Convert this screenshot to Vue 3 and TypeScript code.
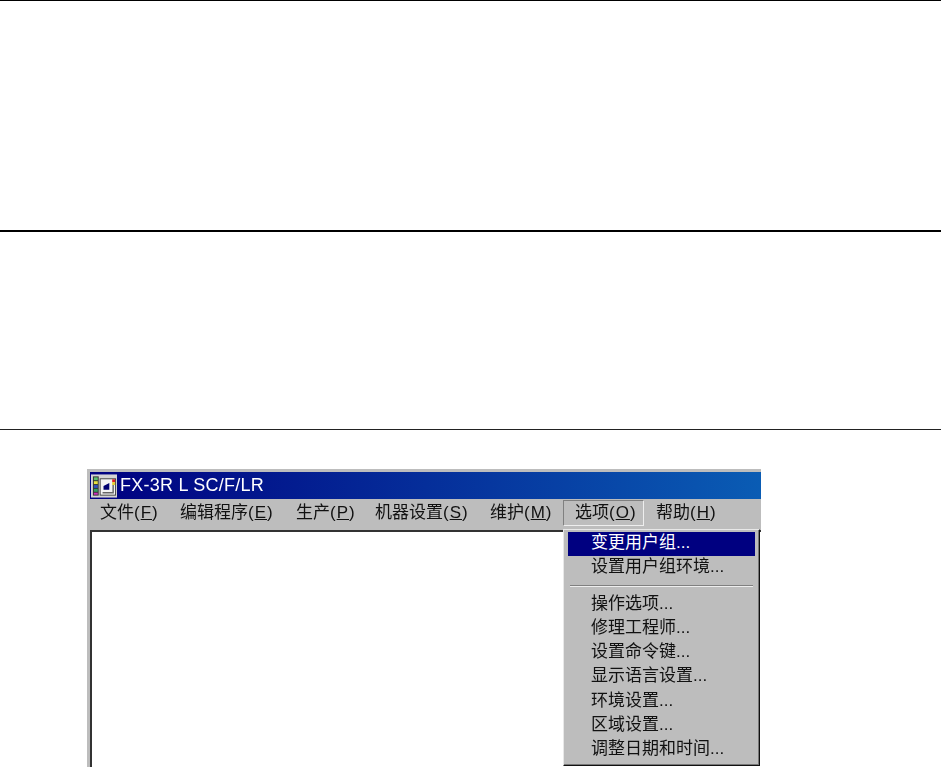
<script setup lang="ts">
interface MenuItem { label: string; key: string; width: number; active?: boolean }
const menus: MenuItem[] = [
  { label: '文件', key: 'F', width: 80 },
  { label: '编辑程序', key: 'E', width: 116 },
  { label: '生产', key: 'P', width: 79 },
  { label: '机器设置', key: 'S', width: 115 },
  { label: '维护', key: 'M', width: 73 },
  { label: '选项', key: 'O', width: 81, active: true },
  { label: '帮助', key: 'H', width: 70 },
]
const groupOne = ['变更用户组...', '设置用户组环境...']
const groupTwo = ['操作选项...', '修理工程师...', '设置命令键...', '显示语言设置...', '环境设置...', '区域设置...', '调整日期和时间...']
</script>

<template>
  <main class="page">
    <hr class="rule first" />
    <hr class="rule second" />
    <hr class="rule third" />
    <section class="window">
      <header class="titlebar">
        <svg class="app-icon" width="26" height="24" viewBox="0 0 27 24">
          <rect x="0" y="0" width="27" height="24" fill="#d4d4d4" />
          <rect x="2" y="2" width="6" height="20" fill="#333" />
          <rect x="3" y="3" width="4" height="3" fill="#5cc070" />
          <rect x="3" y="7" width="4" height="3" fill="#e8e040" />
          <rect x="3" y="11" width="4" height="3" fill="#3050c0" />
          <rect x="3" y="15" width="4" height="3" fill="#30a060" />
          <rect x="3" y="19" width="4" height="2" fill="#d030c0" />
          <rect x="9.5" y="4.5" width="16" height="17" fill="#f4f4f4" stroke="#444" stroke-width="1" />
          <rect x="22" y="5" width="3" height="3" fill="#e02020" />
          <rect x="22" y="8" width="3" height="3" fill="#e8d030" />
          <path d="M13 16 L13 12 L19 9 L19 16 Z" fill="#000070" />
          <path d="M12 19 L23 19 L23 11" fill="none" stroke="#666" stroke-width="1.5" />
        </svg>
        <span class="title">FX-3R L SC/F/LR</span>
      </header>
      <nav class="menubar">
        <span
          v-for="m in menus"
          :key="m.key"
          class="menu"
          :class="{ active: m.active }"
          :style="{ width: m.width + 'px' }"
        >{{ m.label }}<span class="accel">(<u>{{ m.key }}</u>)</span></span>
      </nav>
      <div class="client"></div>
      <div class="dropdown">
        <div
          v-for="(item, i) in groupOne"
          :key="item"
          class="item"
          :class="{ selected: i === 0 }"
        >{{ item }}</div>
        <div class="separator"></div>
        <div v-for="item in groupTwo" :key="item" class="item">{{ item }}</div>
      </div>
    </section>
  </main>
</template>

<style>
html, body { margin: 0; background: #fff; }
</style>

<style scoped>
.page {
  width: 941px;
  height: 767px;
  overflow: hidden;
  background: #fff;
  display: flex;
  flex-direction: column;
  font-family: "Liberation Sans", "Noto Sans CJK SC", sans-serif;
}
.rule { margin: 0; border: 0; background: #000; width: 100%; }
.first { height: 1px; }
.second { height: 2px; margin-top: 229px; }
.third { height: 1px; margin-top: 197px; background: #222; }
.window {
  position: relative;
  flex: none;
  width: 674px;
  height: 298px;
  margin: 39px 0 0 87px;
  background: #bdbdbd;
  box-sizing: border-box;
  padding: 3px 0 0 3px;
  display: flex;
  flex-direction: column;
}
.titlebar {
  height: 27px;
  flex: none;
  display: flex;
  align-items: center;
  gap: 3px;
  padding-left: 1px;
  background: linear-gradient(90deg, #000080, #0a5cb4);
}
.app-icon { flex: none; }
.title {
  color: #fff;
  font-size: 18px;
  letter-spacing: 0.25px;
  filter: blur(0.35px);
}
.menubar {
  height: 31px;
  flex: none;
  display: flex;
  align-items: flex-start;
  box-sizing: border-box;
  padding: 1px 0 0 10px;
  color: #111;
}
.menu {
  box-sizing: border-box;
  flex: none;
  height: 26px;
  line-height: 26px;
  white-space: nowrap;
  filter: blur(0.35px);
  font-size: 17px;
}
.accel { letter-spacing: 1px; }
.menu.active {
  margin-right: 12px;
  padding-left: 11px;
  line-height: 24px;
  border: 1px solid;
  border-color: #808080 #eee #eee #808080;
}
.client {
  flex: 1;
  background: #fff;
  border-top: 2px solid #333;
  border-left: 2px solid #333;
}
.dropdown {
  position: absolute;
  left: 476px;
  top: 60px;
  width: 197px;
  height: 237px;
  box-sizing: border-box;
  padding: 2px 4px;
  background: #bdbdbd;
  border: 1px solid;
  border-color: #e8e8e8 #111 #111 #e8e8e8;
  box-shadow: inset -1px -1px 0 #777;
  color: #111;
}
.item {
  height: 24.3px;
  line-height: 22px;
  padding-left: 23px;
  font-size: 17px;
  white-space: nowrap;
  filter: blur(0.35px);
}
.item.selected {
  background: #000080;
  color: #fff;
  filter: none;
}
.separator {
  height: 1px;
  margin: 4px 2px 6px;
  background: #808080;
  border-bottom: 1px solid #eee;
}
</style>
